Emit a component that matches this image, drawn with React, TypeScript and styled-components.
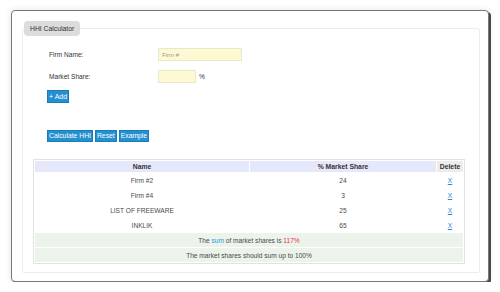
import styled, { createGlobalStyle } from "styled-components";

const GlobalStyle = createGlobalStyle`
  body {
    margin: 0;
    background: #ffffff;
    font-family: "Liberation Sans", Arial, sans-serif;
    color: #444444;
  }
`;

const Card = styled.div`
  box-sizing: border-box;
  width: 478px;
  margin: 10px 0 0 11px;
  padding: 10px 8px 8px 10px;
  border: 1px solid #777777;
  border-radius: 4px;
  background: #ffffff;
  box-shadow: 2px 2px 0 #4a4a4a, 0 0 6px rgba(0, 0, 0, 0.12);
`;

const Fieldset = styled.fieldset`
  margin: 0;
  padding: 0 0 8px 0;
  border: 1px solid #ececec;
  border-radius: 2px;
  min-width: 0;
`;

const Legend = styled.legend`
  margin-left: 1px;
  padding: 0 6px;
  height: 15px;
  line-height: 15px;
  font-size: 6.8px;
  color: #333333;
  background: #dcdcdc;
  border-radius: 4px;
`;

const Form = styled.div`
  display: grid;
  grid-template-columns: 111px auto;
  row-gap: 9px;
  align-items: center;
  padding: 12px 0 0 24px;
`;

const Label = styled.span`
  padding-left: 2px;
  font-size: 6.6px;
  color: #333333;
`;

const InputWrap = styled.div`
  display: flex;
  align-items: center;
  gap: 3px;
  font-size: 6.6px;
  color: #333333;
`;

const Input = styled.input<{ $w: number }>`
  box-sizing: border-box;
  width: ${(p) => p.$w}px;
  height: 13px;
  margin: 0;
  padding: 0 3px;
  border: 1px solid #ebe7cb;
  background: #fdf9d3;
  font-family: "Liberation Sans", Arial, sans-serif;
  font-size: 6px;
  color: #333333;
  outline: none;
  &::placeholder {
    color: #a09a88;
  }
`;

const Button = styled.button`
  height: 12px;
  margin: 0;
  padding: 0 1px;
  border: 1px solid #1b7cb8;
  background: #2590d0;
  color: #ffffff;
  font-family: "Liberation Sans", Arial, sans-serif;
  font-size: 6.8px;
  line-height: 10px;
  white-space: nowrap;
  cursor: pointer;
`;

const AddButton = styled(Button)`
  height: 13px;
  padding: 0 1px;
  font-size: 7px;
`;

const AddRow = styled.div`
  grid-column: 1 / span 2;
  display: flex;
  margin-top: -2px;
`;

const ButtonRow = styled.div`
  display: flex;
  gap: 2px;
  padding: 27px 0 0 24px;
`;

const Table = styled.table`
  width: 432px;
  margin: 17px 0 0 10px;
  border: 1px solid #e2e2e2;
  border-spacing: 1px;
  font-size: 6.6px;
  color: #4a4a4a;
`;

const Th = styled.th<{ $w: number; $grey?: boolean }>`
  width: ${(p) => p.$w}px;
  height: 11px;
  padding: 0;
  font-weight: bold;
  font-size: 6.8px;
  color: #333333;
  background: ${(p) => (p.$grey ? "#ececec" : "#e5e8fb")};
`;

const Td = styled.td`
  height: 14px;
  padding: 0;
  font-weight: normal;
  text-align: center;
`;

const SummaryCell = styled.td`
  height: 14px;
  padding: 0;
  text-align: center;
  background: #ebf3ea;
`;

const DeleteLink = styled.a`
  color: #2f86d4;
  text-decoration: underline;
  cursor: pointer;
`;

const SumWord = styled.span`
  color: #2aa0d8;
`;

const Total = styled.span`
  color: #e8364a;
`;

const firms = [
  { name: "Firm #2", share: 24 },
  { name: "Firm #4", share: 3 },
  { name: "LIST OF FREEWARE", share: 25 },
  { name: "INKLIK", share: 65 },
];

const App = () => {
  const total = firms.reduce((s, f) => s + f.share, 0);
  return (
    <>
      <GlobalStyle />
      <Card>
        <Fieldset>
          <Legend>HHI Calculator</Legend>
          <Form>
            <Label>Firm Name:</Label>
            <InputWrap>
              <Input $w={84} placeholder="Firm #" />
            </InputWrap>
            <Label>Market Share:</Label>
            <InputWrap>
              <Input $w={38} />
              <span>%</span>
            </InputWrap>
            <AddRow>
              <AddButton>+ Add</AddButton>
            </AddRow>
          </Form>
          <ButtonRow>
            <Button>Calculate HHI</Button>
            <Button>Reset</Button>
            <Button>Example</Button>
          </ButtonRow>
          <Table>
            <thead>
              <tr>
                <Th $w={214}>Name</Th>
                <Th $w={186}>% Market Share</Th>
                <Th $w={26} $grey>
                  Delete
                </Th>
              </tr>
            </thead>
            <tbody>
              {firms.map((f) => (
                <tr key={f.name}>
                  <Td>{f.name}</Td>
                  <Td>{f.share}</Td>
                  <Td>
                    <DeleteLink>X</DeleteLink>
                  </Td>
                </tr>
              ))}
              <tr>
                <SummaryCell colSpan={3}>
                  The <SumWord>sum</SumWord> of market shares is{" "}
                  <Total>{total}%</Total>
                </SummaryCell>
              </tr>
              <tr>
                <SummaryCell colSpan={3}>
                  The market shares should sum up to 100%
                </SummaryCell>
              </tr>
            </tbody>
          </Table>
        </Fieldset>
      </Card>
    </>
  );
};

export default App;
